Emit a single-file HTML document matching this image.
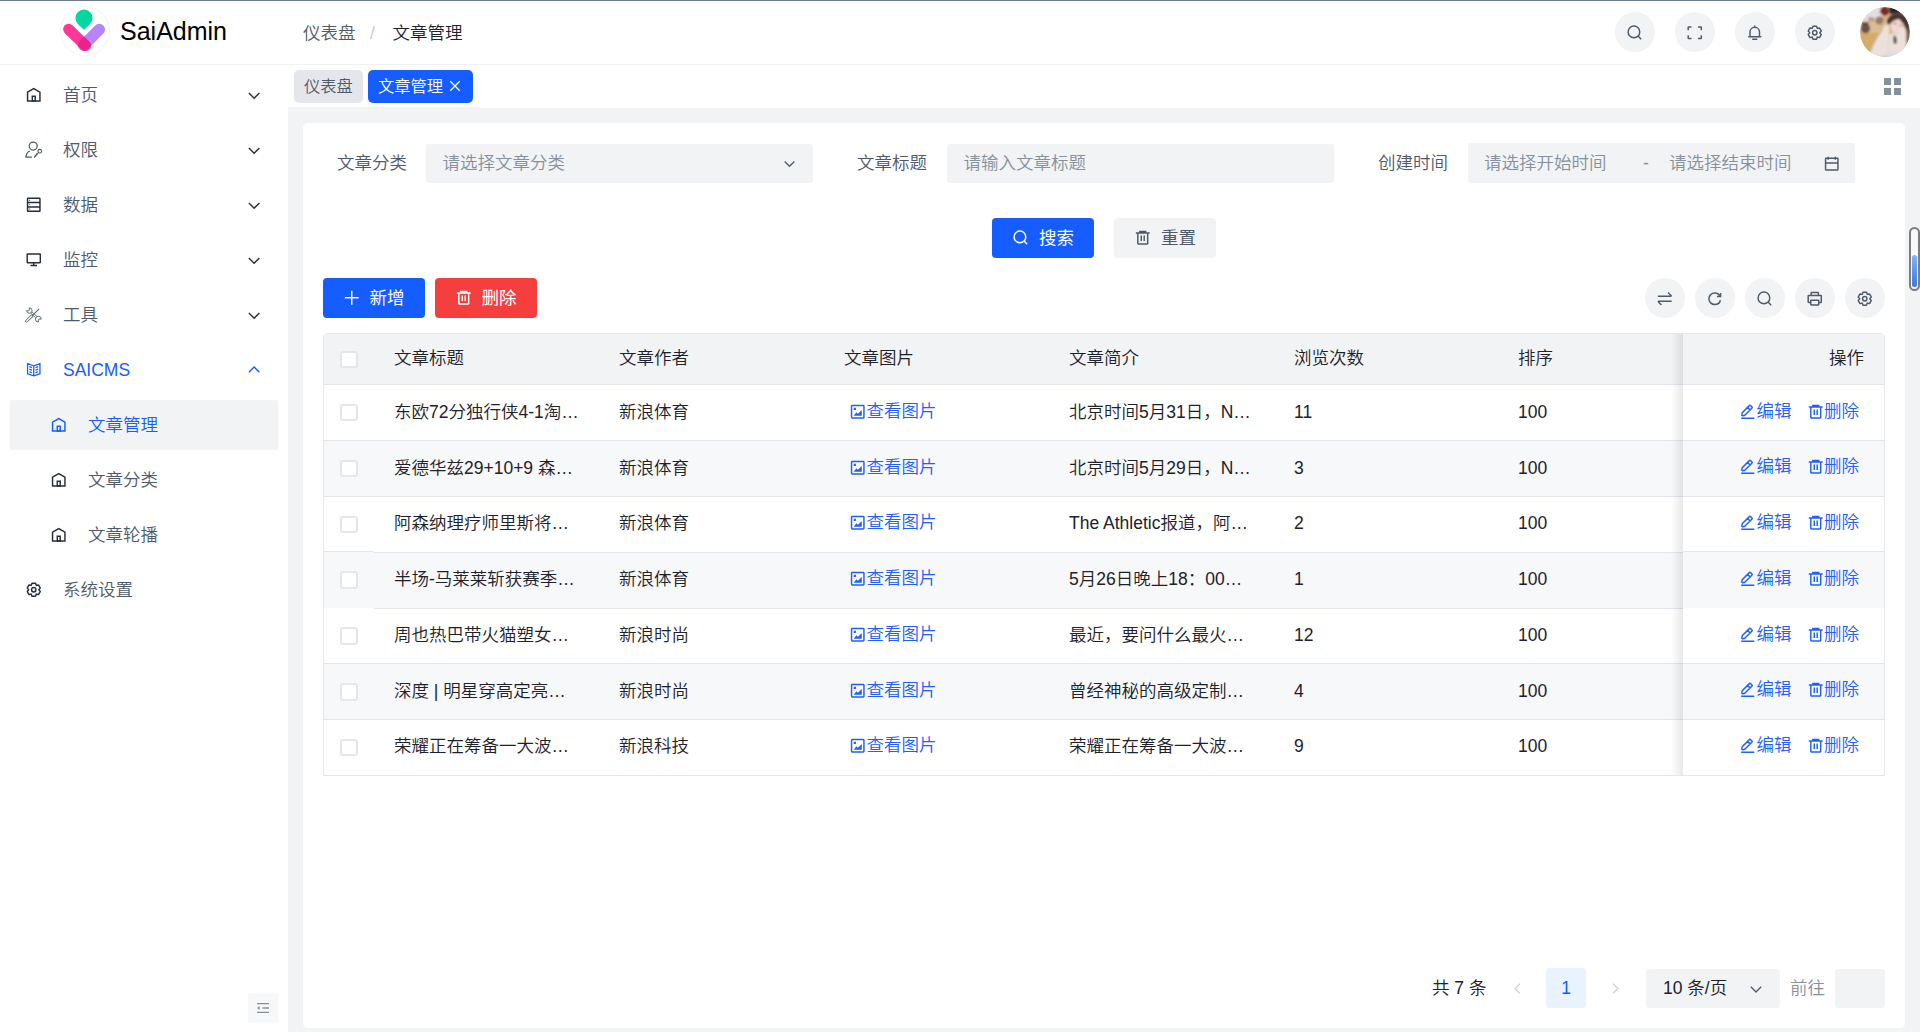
<!DOCTYPE html>
<html lang="zh-CN">
<head>
<meta charset="utf-8">
<title>SaiAdmin - 文章管理</title>
<style>
*{box-sizing:border-box;margin:0;padding:0}
html,body{width:1920px;height:1032px;overflow:hidden;background:#fff}
body{position:relative;font-family:"Liberation Sans","Noto Sans CJK SC",sans-serif;font-size:17.5px;font-weight:350;color:#1d2129;-webkit-font-smoothing:antialiased}
.abs{position:absolute}
svg.i{width:17.5px;height:17.5px;fill:none;stroke:currentColor;stroke-width:4;stroke-linecap:butt;stroke-linejoin:miter;display:block;flex:none}
.topline{left:0;top:0;width:1920px;height:1px;background:#6b7a94;z-index:9}
.header{left:0;top:0;width:1920px;height:65px;border-bottom:1px solid #f1f2f4;background:#fff}
.logo{left:60px;top:6px;width:50px;height:50px}
.brand{left:120px;top:16px;font-size:25px;line-height:30px;color:#000;white-space:nowrap}
.bc{top:18px;height:30px;line-height:30px;white-space:nowrap}
.hbtn{padding-top:2px;top:12px;width:40px;height:40px;border-radius:50%;background:#f2f3f5;color:#4e5969;display:flex;align-items:center;justify-content:center}
.avatar{left:1860px;top:7px;width:50px;height:50px;border-radius:50%;overflow:hidden}
/* sidebar */
.side{left:0;top:65px;width:288px;height:967px;background:#fff}
.mi{left:10px;width:268px;height:50px;border-radius:3px;display:flex;align-items:center;color:#4e5969;white-space:nowrap}
.mi .ic{position:absolute;left:15px;top:16px;color:#272e3b}
.mi .tx{position:absolute;left:53px;top:0;line-height:50px}
.mi .ar{position:absolute;left:236px;top:17px;width:16.25px;height:16.25px;color:#272e3b}
.mi.sub .ic{left:40px}
.mi.sub .tx{left:78px}
.mi.sel{background:#f2f3f5;color:#165dff}
.mi.act{color:#165dff}
.mi.act .ic,.mi.act .ar,.mi.sel .ic{color:#165dff}
.fold{left:248px;top:993px;width:30px;height:30px;border-radius:3px;background:#f7f8fa;color:#86909c;display:flex;align-items:center;justify-content:center}
/* tabs */
.tab{top:70px;height:33px;border-radius:5px;font-size:16.25px;line-height:33px;white-space:nowrap;padding-left:10px}
.content{left:288px;top:108px;width:1632px;height:924px;background:#f2f3f5}
.card{left:303px;top:123px;width:1602px;height:904.5px;background:#fff;border-radius:5px}
.lbl{top:144px;height:39px;line-height:38px;color:#4e5969;white-space:nowrap}
.inp{top:144px;width:387px;height:39px;background:#f2f3f5;border-radius:3px;color:#86909c;line-height:38px;white-space:nowrap}
.btn{font-weight:400;height:40px;width:102px;border-radius:4px;display:flex;align-items:center;white-space:nowrap;line-height:40px}
.btn .t{position:absolute;top:0}
.btn svg{position:absolute}
.cbtn{padding-top:1.500px;top:278px;width:40px;height:40px;border-radius:50%;background:#f2f3f5;color:#4e5969;display:flex;align-items:center;justify-content:center}
/* table */
.tbl{left:323px;top:333px;width:1562px;height:443px;border:1px solid #e5e6eb;border-radius:5px 5px 0 0;overflow:hidden}
.tr{left:0;width:1560px;height:55.83px;border-bottom:1px solid #e5e6eb;background:#fff}
.tr.h{top:0;height:51.2px;background:#f2f3f5}
.tr.s{background:#f7f8fa}
.td{top:0;height:55.83px;line-height:54px;white-space:nowrap;overflow:hidden}
.tr.h .td{line-height:49px;height:51px}
.fixl{left:0;top:0;width:50px;height:441px}
.cb{left:16px;width:17.5px;height:17.5px;border:2px solid #e5e6eb;border-radius:3px;background:#fff}
.lk{color:#2160f3}
.fix{left:1359px;top:0;width:201px;height:441px}
.fsh{left:1347px;top:0;width:12px;height:441px;background:linear-gradient(to right,rgba(0,0,0,0),rgba(0,0,0,.09))}
.pg{top:968px;height:40px;line-height:40px;white-space:nowrap}
</style>
</head>
<body>
<div class="abs header"></div>
<div class="abs topline"></div>
<svg class="abs logo" viewBox="0 0 50 50"><defs><clipPath id="lgp"><path d="M4.7 27.1a5.5 5.5 0 0 1 7.8-7.8l16.9 16.4a5.5 5.5 0 0 1-7.8 7.8Z"/></clipPath></defs><circle cx="25" cy="25" r="24.5" fill="#fff" stroke="#f2f3f5" stroke-width="1"/><path d="M39.3 23.5 23.6 39.2" stroke="#b685fb" stroke-width="11.5" stroke-linecap="round" fill="none"/><path d="M8.6 23.25 25.5 39.6" stroke="#fb3797" stroke-width="11" stroke-linecap="round" fill="none"/><path d="M39.3 23.5 23.6 39.2" stroke="#ec2090" stroke-width="11.5" stroke-linecap="round" fill="none" clip-path="url(#lgp)"/><path d="M24 24.6 17.6 18.6A9.2 9.2 0 1 1 30.4 18.6Z" fill="#06d6a0" stroke="#fff" stroke-width="1.2"/></svg>
<div class="abs brand">SaiAdmin</div>
<div class="abs bc" style="left:303px;color:#4e5969">仪表盘</div>
<div class="abs bc" style="left:370px;color:#c9cdd4">/</div>
<div class="abs bc" style="left:392.5px;color:#1d2129">文章管理</div>
<div class="abs hbtn" style="left:1615px"><svg class="i" viewBox="0 0 48 48"><path d="M33.072 33.071c6.248-6.248 6.248-16.379 0-22.627-6.249-6.249-16.38-6.249-22.628 0-6.248 6.248-6.248 16.379 0 22.627 6.248 6.248 16.38 6.248 22.628 0Zm0 0 8.485 8.485"/></svg></div>
<div class="abs hbtn" style="left:1675px"><svg class="i" viewBox="0 0 48 48"><path d="M42 17V9a1 1 0 0 0-1-1h-8M6 17V9a1 1 0 0 1 1-1h8m27 23v8a1 1 0 0 1-1 1h-8M6 31v8a1 1 0 0 0 1 1h8"/></svg></div>
<div class="abs hbtn" style="left:1735px"><svg class="i" viewBox="0 0 48 48"><path d="M24 9c7.18 0 13 5.82 13 13v13H11V22c0-7.18 5.82-13 13-13Zm0 0V4M6 35h36m-25 7h14"/></svg></div>
<div class="abs hbtn" style="left:1795px"><svg class="i" viewBox="0 0 48 48"><path d="M18.797 6.732A1 1 0 0 1 19.76 6h8.48a1 1 0 0 1 .964.732l1.285 4.628a1 1 0 0 0 1.213.7l4.651-1.2a1 1 0 0 1 1.116.468l4.24 7.344a1 1 0 0 1-.153 1.2L38.193 23.3a1 1 0 0 0 0 1.402l3.364 3.427a1 1 0 0 1 .153 1.2l-4.24 7.344a1 1 0 0 1-1.116.468l-4.65-1.2a1 1 0 0 0-1.214.7l-1.285 4.628a1 1 0 0 1-.964.732h-8.48a1 1 0 0 1-.963-.732L17.51 36.64a1 1 0 0 0-1.213-.7l-4.65 1.2a1 1 0 0 1-1.116-.468l-4.24-7.344a1 1 0 0 1 .153-1.2L9.809 24.7a1 1 0 0 0 0-1.402l-3.364-3.427a1 1 0 0 1-.153-1.2l4.24-7.344a1 1 0 0 1 1.116-.468l4.65 1.2a1 1 0 0 0 1.213-.7l1.286-4.628Z"/><path d="M30 24a6 6 0 1 1-12 0 6 6 0 0 1 12 0Z"/></svg></div>
<svg class="abs avatar" viewBox="0 0 50 50"><defs><clipPath id="avc"><circle cx="25" cy="25" r="25"/></clipPath><filter id="avb" x="-20%" y="-20%" width="140%" height="140%"><feGaussianBlur stdDeviation="1.1"/></filter></defs><g clip-path="url(#avc)"><rect width="50" height="50" fill="#d3b182"/><g filter="url(#avb)"><path d="M0 0H22V9L14 12 6 16 0 18Z" fill="#e4dde3"/><rect x="0" y="14" width="26" height="13" fill="#d9bc93"/><path d="M0 26H20L16 50H0Z" fill="#d4ab69"/><ellipse cx="24.500" cy="4" rx="4.600" ry="4.300" fill="#7a2822"/><path d="M29 0H50V8L40 6 30 7Z" fill="#2a2230"/><ellipse cx="5.500" cy="21.500" rx="4.600" ry="5" fill="#6a5047"/><rect x="1.500" y="15.500" width="7" height="2" fill="#4a372f"/><ellipse cx="19.500" cy="13.500" rx="3.800" ry="4" fill="#9b7a66"/><ellipse cx="11" cy="12" rx="3" ry="2" fill="#b89a80"/><path d="M27 17C27 8 36 4 44 8 49 11 50 20 50 34L45 33 44 16Z" fill="#47302e"/><ellipse cx="36.500" cy="19" rx="6.200" ry="7.500" fill="#f1d6d1"/><path d="M29 14C31 8 40 7 45 13 40 11 34 12 30 17Z" fill="#4a322f"/><path d="M33.500 16.500h3M39.500 18.500h2.500" stroke="#6b4a44" stroke-width="1"/><path d="M9 50C12 40 17 30 22 25 23 20 25 17 28 17.500 30 19 29 24 29 27L33 26 38 27C39 22 42 19 45 20 47 26 47 40 43 50Z" fill="#eae2da"/><path d="M46 21C49 24 50 30 50 38L46.500 40Z" fill="#8a6b57"/><path d="M33.500 29C35.500 28 37 30 36.500 36 35.500 38 34 37 33.500 35Z" fill="#4b3429"/><path d="M29 27 28.500 45" stroke="#d9cfc6" stroke-width="1"/><path d="M20 50C25 44.500 36 44 42 47.500V50Z" fill="#dddbe8"/></g></g></svg>
<div class="abs side"></div>
<div class="abs mi" style="top:70px"><svg class="i ic" viewBox="0 0 48 48"><path d="M7 17 24 7l17 10v24H7V17Z"/><path d="M20 28h8v13h-8V28Z"/></svg><span class="tx">首页</span><svg class="i ar" viewBox="0 0 48 48"><path d="M39.6 17.443 24.043 33 8.487 17.443"/></svg></div>
<div class="abs mi" style="top:125px"><svg class="i ic" viewBox="0 0 48 48" style="stroke-width:3.4;color:#4e5969"><circle cx="22.5" cy="13.8" r="11"/><path d="M13.6 27.400C7 30 3 37 2.700 44.200H19"/><circle cx="40.600" cy="28" r="5" style="stroke-width:3"/><path d="M37 31.500 25 45.500M30.500 34.500l4 3.500M27 38.500l4 3.500" style="stroke-width:3"/></svg><span class="tx">权限</span><svg class="i ar" viewBox="0 0 48 48"><path d="M39.6 17.443 24.043 33 8.487 17.443"/></svg></div>
<div class="abs mi" style="top:180px"><svg class="i ic" viewBox="0 0 48 48"><path d="M7 18h34v12H7V18ZM40 6H8a1 1 0 0 0-1 1v11h34V7a1 1 0 0 0-1-1ZM7 30h34v11a1 1 0 0 1-1 1H8a1 1 0 0 1-1-1V30Z"/><path d="M12 12h2M12 24h2M12 36h2" style="stroke-width:3"/></svg><span class="tx">数据</span><svg class="i ar" viewBox="0 0 48 48"><path d="M39.6 17.443 24.043 33 8.487 17.443"/></svg></div>
<div class="abs mi" style="top:235px"><svg class="i ic" viewBox="0 0 48 48"><path d="M24 32v8m0 0h-9m9 0h9M7 32h34a1 1 0 0 0 1-1V9a1 1 0 0 0-1-1H7a1 1 0 0 0-1 1v22a1 1 0 0 0 1 1Z"/></svg><span class="tx">监控</span><svg class="i ar" viewBox="0 0 48 48"><path d="M39.6 17.443 24.043 33 8.487 17.443"/></svg></div>
<div class="abs mi" style="top:290px"><svg class="i ic" viewBox="0 0 48 48" style="stroke-width:2.600;color:#5a6473"><path d="M12 5A7.500 7.500 0 1 1 4.500 12.500M12 5v6.500l-1.500 1.500H4.500M44.500 36A8 8 0 1 0 36.500 44M44.500 36H38l-1.500 1.500V44M19.100 16 32.600 28.500M15.500 19.600 29 32.100"/><path d="M18.400 27.700 4.400 41.100" style="stroke-width:8;stroke-linecap:round"/><path d="M18.400 27.700 4.400 41.100" style="stroke-width:3.600;stroke-linecap:round;stroke:#fff"/><path d="M38.500 8 21 25.500" style="stroke-width:3"/></svg><span class="tx">工具</span><svg class="i ar" viewBox="0 0 48 48"><path d="M39.6 17.443 24.043 33 8.487 17.443"/></svg></div>
<div class="abs mi act" style="top:345px"><svg class="i ic" viewBox="0 0 48 48" style="stroke-width:3.500"><path d="M24 13 7 7v28l17 6 17-6V7l-17 6Zm0 0v27.5M29 18l7-2.500M29 25l7-2.500M29 32l7-2.500M19 18l-7-2.500m7 9.500-7-2.500m7 9.500-7-2.500"/></svg><span class="tx">SAICMS</span><svg class="i ar" viewBox="0 0 48 48"><path d="M39.6 30.557 24.043 15 8.487 30.557"/></svg></div>
<div class="abs mi sub sel" style="top:400px"><svg class="i ic" viewBox="0 0 48 48"><path d="M7 17 24 7l17 10v24H7V17Z"/><path d="M20 28h8v13h-8V28Z"/></svg><span class="tx">文章管理</span></div>
<div class="abs mi sub" style="top:455px"><svg class="i ic" viewBox="0 0 48 48"><path d="M7 17 24 7l17 10v24H7V17Z"/><path d="M20 28h8v13h-8V28Z"/></svg><span class="tx">文章分类</span></div>
<div class="abs mi sub" style="top:510px"><svg class="i ic" viewBox="0 0 48 48"><path d="M7 17 24 7l17 10v24H7V17Z"/><path d="M20 28h8v13h-8V28Z"/></svg><span class="tx">文章轮播</span></div>
<div class="abs mi" style="top:565px"><svg class="i ic" viewBox="0 0 48 48"><path d="M18.797 6.732A1 1 0 0 1 19.76 6h8.48a1 1 0 0 1 .964.732l1.285 4.628a1 1 0 0 0 1.213.7l4.651-1.200a1 1 0 0 1 1.116.468l4.240 7.344a1 1 0 0 1-.153 1.200L38.193 23.300a1 1 0 0 0 0 1.402l3.364 3.427a1 1 0 0 1 .153 1.200l-4.240 7.344a1 1 0 0 1-1.116.468l-4.650-1.200a1 1 0 0 0-1.214.7l-1.285 4.628a1 1 0 0 1-.964.732h-8.480a1 1 0 0 1-.963-.732L17.510 36.640a1 1 0 0 0-1.213-.7l-4.650 1.200a1 1 0 0 1-1.116-.468l-4.240-7.344a1 1 0 0 1 .153-1.200L9.809 24.700a1 1 0 0 0 0-1.402l-3.364-3.427a1 1 0 0 1-.153-1.200l4.240-7.344a1 1 0 0 1 1.116-.468l4.650 1.200a1 1 0 0 0 1.213-.7l1.286-4.628Z"/><path d="M30 24a6 6 0 1 1-12 0 6 6 0 0 1 12 0Z"/></svg><span class="tx">系统设置</span></div>
<div class="abs fold"><svg class="i" viewBox="0 0 48 48" style="width:16px;height:16px"><path d="M42 11H6M42 24H22M42 37H6"/><path d="M14 30 6 24l8-6Z" fill="currentColor" stroke="none"/></svg></div>
<div class="abs tab" style="left:294px;width:69px;background:#e5e6eb;color:#4e5969">仪表盘</div>
<div class="abs tab" style="left:368px;width:105px;background:#165dff;color:#fff">文章管理<svg class="i" viewBox="0 0 48 48" style="position:absolute;left:79.3px;top:8.2px;width:16px;height:16px;stroke-width:3.8"><path d="M9.857 9.858 24 24m0 0 14.142 14.142M24 24 38.142 9.858M24 24 9.857 38.142"/></svg></div>
<svg class="abs" style="left:1884px;top:78px;width:17px;height:17px" viewBox="0 0 17 17"><path d="M0 0h7v7H0zM10 0h7v7h-7zM0 10h7v7H0zM10 10h7v7h-7z" fill="#86909c"/></svg>
<div class="abs content"></div>
<div class="abs" style="left:288px;top:107px;width:192px;height:1px;background:#f2f3f5"></div>
<div class="abs card"></div>
<div class="abs" style="left:1909px;top:227px;width:11px;height:64px;border:2px solid #7c7c7c;border-radius:6px;background:#f6f8fa;overflow:hidden"><div class="abs" style="left:1px;top:26px;width:5px;height:32px;border-radius:3px;background:linear-gradient(#7ab8f7,#3a78e8)"></div></div>
<div class="abs lbl" style="left:337px">文章分类</div>
<div class="abs inp" style="left:426px"><span class="abs" style="left:16.5px;top:0">请选择文章分类</span><svg class="i" viewBox="0 0 48 48" style="position:absolute;left:355.5px;top:11.5px;width:15px;height:15px;color:#4e5969"><path d="M39.600 17.443 24.043 33 8.487 17.443"/></svg></div>
<div class="abs lbl" style="left:857px">文章标题</div>
<div class="abs inp" style="left:947px"><span class="abs" style="left:16.5px;top:0">请输入文章标题</span></div>
<div class="abs lbl" style="left:1378px">创建时间</div>
<div class="abs inp" style="left:1468px;top:143px;height:40px;line-height:40px"><span class="abs" style="left:16px;top:0">请选择开始时间</span><span class="abs" style="left:175px;top:0">-</span><span class="abs" style="left:201px;top:0">请选择结束时间</span><svg class="i" viewBox="0 0 48 48" style="position:absolute;left:355px;top:11.5px;width:17.5px;height:17.5px;color:#4e5969"><path d="M7 22h34M14 5v8m20-8v8M8 41h32a1 1 0 0 0 1-1V10a1 1 0 0 0-1-1H8a1 1 0 0 0-1 1v30a1 1 0 0 0 1 1Z"/></svg></div>
<div class="abs btn" style="left:992px;top:218px;background:#165dff;color:#fff"><svg class="i" viewBox="0 0 48 48" style="left:20px;top:11px"><path d="M33.072 33.071c6.248-6.248 6.248-16.379 0-22.627-6.249-6.249-16.380-6.249-22.628 0-6.248 6.248-6.248 16.379 0 22.627 6.248 6.248 16.380 6.248 22.628 0Zm0 0 8.485 8.485"/></svg><span class="t" style="left:47px">搜索</span></div>
<div class="abs btn" style="left:1114px;top:218px;background:#f2f3f5;color:#4e5969"><svg class="i" viewBox="0 0 48 48" style="left:20px;top:11px"><path d="M5 11h5.500m0 0v29a1 1 0 0 0 1 1h25a1 1 0 0 0 1-1V11m-27 0H16m21.500 0H43m-5.500 0H32m-16 0V7h16v4m-16 0h16M20 18v15m8-15v15"/></svg><span class="t" style="left:47px">重置</span></div>
<div class="abs btn" style="left:323px;top:278px;background:#165dff;color:#fff"><svg class="i" viewBox="0 0 48 48" style="left:20px;top:11px"><path d="M5 24h38M24 5v38"/></svg><span class="t" style="left:46.5px">新增</span></div>
<div class="abs btn" style="left:435px;top:278px;background:#f53f3f;color:#fff"><svg class="i" viewBox="0 0 48 48" style="left:20px;top:11px"><path d="M5 11h5.500m0 0v29a1 1 0 0 0 1 1h25a1 1 0 0 0 1-1V11m-27 0H16m21.500 0H43m-5.500 0H32m-16 0V7h16v4m-16 0h16M20 18v15m8-15v15"/></svg><span class="t" style="left:46.5px">删除</span></div>
<div class="abs cbtn" style="left:1645px"><svg class="i" viewBox="0 0 48 48"><path d="M5 17h35.586c.890 0 1.337-1.077.707-1.707L33 7M43 31H7.414c-.890 0-1.337 1.077-.707 1.707L15 41"/></svg></div>
<div class="abs cbtn" style="left:1695px"><svg class="i" viewBox="0 0 48 48"><path d="M38.837 18C36.463 12.136 30.715 8 24 8 15.163 8 8 15.163 8 24s7.163 16 16 16c7.455 0 13.720-5.100 15.496-12M40 8v10H30"/></svg></div>
<div class="abs cbtn" style="left:1745px"><svg class="i" viewBox="0 0 48 48"><path d="M33.072 33.071c6.248-6.248 6.248-16.379 0-22.627-6.249-6.249-16.380-6.249-22.628 0-6.248 6.248-6.248 16.379 0 22.627 6.248 6.248 16.380 6.248 22.628 0Zm0 0 8.485 8.485"/></svg></div>
<div class="abs cbtn" style="left:1795px"><svg class="i" viewBox="0 0 48 48"><path d="M14 15V8a1 1 0 0 1 1-1h18a1 1 0 0 1 1 1v7m-20 0H7a1 1 0 0 0-1 1v17a1 1 0 0 0 1 1h6m1-19h20m0 0h7a1 1 0 0 1 1 1v17a1 1 0 0 1-1 1h-6m-22 0v6a1 1 0 0 0 1 1h20a1 1 0 0 0 1-1v-6m-22 0v-5a1 1 0 0 1 1-1h20a1 1 0 0 1 1 1v5"/></svg></div>
<div class="abs cbtn" style="left:1845px"><svg class="i" viewBox="0 0 48 48"><path d="M18.797 6.732A1 1 0 0 1 19.760 6h8.480a1 1 0 0 1 .964.732l1.285 4.628a1 1 0 0 0 1.213.700l4.651-1.200a1 1 0 0 1 1.116.468l4.240 7.344a1 1 0 0 1-.153 1.200L38.193 23.300a1 1 0 0 0 0 1.402l3.364 3.427a1 1 0 0 1 .153 1.200l-4.240 7.344a1 1 0 0 1-1.116.468l-4.650-1.200a1 1 0 0 0-1.214.700l-1.285 4.628a1 1 0 0 1-.964.732h-8.480a1 1 0 0 1-.963-.732L17.510 36.640a1 1 0 0 0-1.213-.700l-4.650 1.200a1 1 0 0 1-1.116-.468l-4.240-7.344a1 1 0 0 1 .153-1.200L9.809 24.700a1 1 0 0 0 0-1.402l-3.364-3.427a1 1 0 0 1-.153-1.200l4.240-7.344a1 1 0 0 1 1.116-.468l4.650 1.200a1 1 0 0 0 1.213-.700l1.286-4.628Z"/><path d="M30 24a6 6 0 1 1-12 0 6 6 0 0 1 12 0Z"/></svg></div>
<div class="abs tbl">
<div class="abs tr h"><span class="abs td" style="left:70px">文章标题</span><span class="abs td" style="left:295px">文章作者</span><span class="abs td" style="left:520px">文章图片</span><span class="abs td" style="left:745px">文章简介</span><span class="abs td" style="left:970px">浏览次数</span><span class="abs td" style="left:1194px">排序</span></div>
<div class="abs tr" style="top:51.20px"><span class="abs td" style="left:70px;width:185px;text-overflow:ellipsis">东欧72分独行侠4-1淘汰森林狼晋级总决赛</span><span class="abs td" style="left:295px">新浪体育</span><span class="abs td lk" style="left:525px;top:-1px"><svg class="i" viewBox="0 0 48 48" style="position:absolute;left:0;top:19px;width:17.5px;height:17.5px"><path d="m24 33 9-9v9h-9Zm0 0-3.500-4.500L17 33h7Zm15 8H9a2 2 0 0 1-2-2V9a2 2 0 0 1 2-2h30a2 2 0 0 1 2 2v30a2 2 0 0 1-2 2ZM15 15h2v2h-2v-2Z"/><path fill="currentColor" stroke="none" d="M33 33v-9l-9 9h9ZM23.500 33l-3-4-3 4h6ZM15 15h2v2h-2z"/></svg><span style="padding-left:17.5px">查看图片</span></span><span class="abs td" style="left:745px;width:185px;text-overflow:ellipsis">北京时间5月31日，NBA季后赛西部决赛</span><span class="abs td" style="left:970px">11</span><span class="abs td" style="left:1194px">100</span></div>
<div class="abs tr s" style="top:107.03px"><span class="abs td" style="left:70px;width:185px;text-overflow:ellipsis">爱德华兹29+10+9 森林狼大胜独行侠</span><span class="abs td" style="left:295px">新浪体育</span><span class="abs td lk" style="left:525px;top:-1px"><svg class="i" viewBox="0 0 48 48" style="position:absolute;left:0;top:19px;width:17.5px;height:17.5px"><path d="m24 33 9-9v9h-9Zm0 0-3.500-4.500L17 33h7Zm15 8H9a2 2 0 0 1-2-2V9a2 2 0 0 1 2-2h30a2 2 0 0 1 2 2v30a2 2 0 0 1-2 2ZM15 15h2v2h-2v-2Z"/><path fill="currentColor" stroke="none" d="M33 33v-9l-9 9h9ZM23.500 33l-3-4-3 4h6ZM15 15h2v2h-2z"/></svg><span style="padding-left:17.5px">查看图片</span></span><span class="abs td" style="left:745px;width:185px;text-overflow:ellipsis">北京时间5月29日，NBA季后赛西部决赛</span><span class="abs td" style="left:970px">3</span><span class="abs td" style="left:1194px">100</span></div>
<div class="abs tr" style="top:162.86px"><span class="abs td" style="left:70px;width:185px;text-overflow:ellipsis;top:-1px">阿森纳理疗师里斯将加盟曼联</span><span class="abs td" style="left:295px;top:-1px">新浪体育</span><span class="abs td lk" style="left:525px;top:-2px"><svg class="i" viewBox="0 0 48 48" style="position:absolute;left:0;top:19px;width:17.5px;height:17.5px"><path d="m24 33 9-9v9h-9Zm0 0-3.500-4.500L17 33h7Zm15 8H9a2 2 0 0 1-2-2V9a2 2 0 0 1 2-2h30a2 2 0 0 1 2 2v30a2 2 0 0 1-2 2ZM15 15h2v2h-2v-2Z"/><path fill="currentColor" stroke="none" d="M33 33v-9l-9 9h9ZM23.500 33l-3-4-3 4h6ZM15 15h2v2h-2z"/></svg><span style="padding-left:17.5px">查看图片</span></span><span class="abs td" style="left:745px;width:185px;text-overflow:ellipsis;top:-1px">The Athletic报道，阿森纳理疗师</span><span class="abs td" style="left:970px;top:-1px">2</span><span class="abs td" style="left:1194px;top:-1px">100</span></div>
<div class="abs tr s" style="top:218.69px"><span class="abs td" style="left:70px;width:185px;text-overflow:ellipsis;top:-1px">半场-马莱莱斩获赛季第七球</span><span class="abs td" style="left:295px;top:-1px">新浪体育</span><span class="abs td lk" style="left:525px;top:-2px"><svg class="i" viewBox="0 0 48 48" style="position:absolute;left:0;top:19px;width:17.5px;height:17.5px"><path d="m24 33 9-9v9h-9Zm0 0-3.500-4.500L17 33h7Zm15 8H9a2 2 0 0 1-2-2V9a2 2 0 0 1 2-2h30a2 2 0 0 1 2 2v30a2 2 0 0 1-2 2ZM15 15h2v2h-2v-2Z"/><path fill="currentColor" stroke="none" d="M33 33v-9l-9 9h9ZM23.500 33l-3-4-3 4h6ZM15 15h2v2h-2z"/></svg><span style="padding-left:17.5px">查看图片</span></span><span class="abs td" style="left:745px;width:185px;text-overflow:ellipsis;top:-1px">5月26日晚上18：00，中超联赛</span><span class="abs td" style="left:970px;top:-1px">1</span><span class="abs td" style="left:1194px;top:-1px">100</span></div>
<div class="abs tr" style="top:274.52px"><span class="abs td" style="left:70px;width:185px;text-overflow:ellipsis;top:-1px">周也热巴带火猫塑女孩穿搭</span><span class="abs td" style="left:295px;top:-1px">新浪时尚</span><span class="abs td lk" style="left:525px;top:-2px"><svg class="i" viewBox="0 0 48 48" style="position:absolute;left:0;top:19px;width:17.5px;height:17.5px"><path d="m24 33 9-9v9h-9Zm0 0-3.500-4.500L17 33h7Zm15 8H9a2 2 0 0 1-2-2V9a2 2 0 0 1 2-2h30a2 2 0 0 1 2 2v30a2 2 0 0 1-2 2ZM15 15h2v2h-2v-2Z"/><path fill="currentColor" stroke="none" d="M33 33v-9l-9 9h9ZM23.500 33l-3-4-3 4h6ZM15 15h2v2h-2z"/></svg><span style="padding-left:17.5px">查看图片</span></span><span class="abs td" style="left:745px;width:185px;text-overflow:ellipsis;top:-1px">最近，要问什么最火，那一定是</span><span class="abs td" style="left:970px;top:-1px">12</span><span class="abs td" style="left:1194px;top:-1px">100</span></div>
<div class="abs tr s" style="top:330.35px"><span class="abs td" style="left:70px;width:185px;text-overflow:ellipsis">深度 | 明星穿高定亮相红毯</span><span class="abs td" style="left:295px">新浪时尚</span><span class="abs td lk" style="left:525px;top:-1px"><svg class="i" viewBox="0 0 48 48" style="position:absolute;left:0;top:19px;width:17.5px;height:17.5px"><path d="m24 33 9-9v9h-9Zm0 0-3.500-4.500L17 33h7Zm15 8H9a2 2 0 0 1-2-2V9a2 2 0 0 1 2-2h30a2 2 0 0 1 2 2v30a2 2 0 0 1-2 2ZM15 15h2v2h-2v-2Z"/><path fill="currentColor" stroke="none" d="M33 33v-9l-9 9h9ZM23.500 33l-3-4-3 4h6ZM15 15h2v2h-2z"/></svg><span style="padding-left:17.5px">查看图片</span></span><span class="abs td" style="left:745px;width:185px;text-overflow:ellipsis">曾经神秘的高级定制时装</span><span class="abs td" style="left:970px">4</span><span class="abs td" style="left:1194px">100</span></div>
<div class="abs tr" style="top:386.18px"><span class="abs td" style="left:70px;width:185px;text-overflow:ellipsis;top:-1px">荣耀正在筹备一大波新品</span><span class="abs td" style="left:295px;top:-1px">新浪科技</span><span class="abs td lk" style="left:525px;top:-2px"><svg class="i" viewBox="0 0 48 48" style="position:absolute;left:0;top:19px;width:17.5px;height:17.5px"><path d="m24 33 9-9v9h-9Zm0 0-3.500-4.500L17 33h7Zm15 8H9a2 2 0 0 1-2-2V9a2 2 0 0 1 2-2h30a2 2 0 0 1 2 2v30a2 2 0 0 1-2 2ZM15 15h2v2h-2v-2Z"/><path fill="currentColor" stroke="none" d="M33 33v-9l-9 9h9ZM23.500 33l-3-4-3 4h6ZM15 15h2v2h-2z"/></svg><span style="padding-left:17.5px">查看图片</span></span><span class="abs td" style="left:745px;width:185px;text-overflow:ellipsis;top:-1px">荣耀正在筹备一大波新品</span><span class="abs td" style="left:970px;top:-1px">9</span><span class="abs td" style="left:1194px;top:-1px">100</span></div>
<div class="abs fixl">
<div class="abs tr h" style="width:50px"><span class="abs cb" style="top:16.5px"></span></div>
<div class="abs tr" style="top:51px;height:56px;width:50px"><span class="abs cb" style="top:18.9px"></span></div>
<div class="abs tr s" style="top:107px;height:56px;width:50px"><span class="abs cb" style="top:18.7px"></span></div>
<div class="abs tr" style="top:163px;height:55px;width:50px"><span class="abs cb" style="top:18.6px"></span></div>
<div class="abs tr s" style="top:218px;height:56px;width:50px;border-bottom:0"><span class="abs cb" style="top:19.4px"></span></div>
<div class="abs tr" style="top:274px;height:56px;width:50px"><span class="abs cb" style="top:19.2px"></span></div>
<div class="abs tr s" style="top:330px;height:56px;width:50px"><span class="abs cb" style="top:19.0px"></span></div>
<div class="abs tr" style="top:386px;height:56px;width:50px"><span class="abs cb" style="top:18.9px"></span></div>
</div>
<div class="abs fsh"></div>
<div class="abs fix">
<div class="abs tr h" style="width:201px"><span class="abs td" style="right:20px">操作</span></div>
<div class="abs tr" style="top:51px;height:56px;width:201px"><span class="abs td lk" style="left:56px;top:-1.5px;height:56px"><svg class="i" viewBox="0 0 48 48" style="position:absolute;left:0;top:19px;width:17.5px;height:17.5px"><path d="m30.480 19.038 5.733-5.734a1 1 0 0 0 0-1.414l-5.586-5.586a1 1 0 0 0-1.414 0l-5.734 5.734m7 7L15.763 33.754a1 1 0 0 1-.590.286l-6.048.708a1 1 0 0 1-1.113-1.069l.477-6.310a1 1 0 0 1 .290-.631l14.700-14.700m7 7-7-7M6 42h36"/></svg><span style="padding-left:17.5px">编辑</span></span><span class="abs td lk" style="left:123.5px;top:-1.5px;height:56px"><svg class="i" viewBox="0 0 48 48" style="position:absolute;left:0;top:19px;width:17.5px;height:17.5px"><path d="M5 11h5.500m0 0v29a1 1 0 0 0 1 1h25a1 1 0 0 0 1-1V11m-27 0H16m21.500 0H43m-5.500 0H32m-16 0V7h16v4m-16 0h16M20 18v15m8-15v15"/></svg><span style="padding-left:17.5px">删除</span></span></div>
<div class="abs tr s" style="top:107px;height:56px;width:201px"><span class="abs td lk" style="left:56px;top:-2.5px;height:56px"><svg class="i" viewBox="0 0 48 48" style="position:absolute;left:0;top:19px;width:17.5px;height:17.5px"><path d="m30.480 19.038 5.733-5.734a1 1 0 0 0 0-1.414l-5.586-5.586a1 1 0 0 0-1.414 0l-5.734 5.734m7 7L15.763 33.754a1 1 0 0 1-.590.286l-6.048.708a1 1 0 0 1-1.113-1.069l.477-6.310a1 1 0 0 1 .290-.631l14.700-14.700m7 7-7-7M6 42h36"/></svg><span style="padding-left:17.5px">编辑</span></span><span class="abs td lk" style="left:123.5px;top:-2.5px;height:56px"><svg class="i" viewBox="0 0 48 48" style="position:absolute;left:0;top:19px;width:17.5px;height:17.5px"><path d="M5 11h5.500m0 0v29a1 1 0 0 0 1 1h25a1 1 0 0 0 1-1V11m-27 0H16m21.500 0H43m-5.500 0H32m-16 0V7h16v4m-16 0h16M20 18v15m8-15v15"/></svg><span style="padding-left:17.5px">删除</span></span></div>
<div class="abs tr" style="top:163px;height:55px;width:201px"><span class="abs td lk" style="left:56px;top:-2.5px;height:56px"><svg class="i" viewBox="0 0 48 48" style="position:absolute;left:0;top:19px;width:17.5px;height:17.5px"><path d="m30.480 19.038 5.733-5.734a1 1 0 0 0 0-1.414l-5.586-5.586a1 1 0 0 0-1.414 0l-5.734 5.734m7 7L15.763 33.754a1 1 0 0 1-.590.286l-6.048.708a1 1 0 0 1-1.113-1.069l.477-6.310a1 1 0 0 1 .290-.631l14.700-14.700m7 7-7-7M6 42h36"/></svg><span style="padding-left:17.5px">编辑</span></span><span class="abs td lk" style="left:123.5px;top:-2.5px;height:56px"><svg class="i" viewBox="0 0 48 48" style="position:absolute;left:0;top:19px;width:17.5px;height:17.5px"><path d="M5 11h5.500m0 0v29a1 1 0 0 0 1 1h25a1 1 0 0 0 1-1V11m-27 0H16m21.500 0H43m-5.500 0H32m-16 0V7h16v4m-16 0h16M20 18v15m8-15v15"/></svg><span style="padding-left:17.5px">删除</span></span></div>
<div class="abs tr s" style="top:218px;height:56px;width:201px;border-bottom:0"><span class="abs td lk" style="left:56px;top:-1.5px;height:56px"><svg class="i" viewBox="0 0 48 48" style="position:absolute;left:0;top:19px;width:17.5px;height:17.5px"><path d="m30.480 19.038 5.733-5.734a1 1 0 0 0 0-1.414l-5.586-5.586a1 1 0 0 0-1.414 0l-5.734 5.734m7 7L15.763 33.754a1 1 0 0 1-.590.286l-6.048.708a1 1 0 0 1-1.113-1.069l.477-6.310a1 1 0 0 1 .290-.631l14.700-14.700m7 7-7-7M6 42h36"/></svg><span style="padding-left:17.5px">编辑</span></span><span class="abs td lk" style="left:123.5px;top:-1.5px;height:56px"><svg class="i" viewBox="0 0 48 48" style="position:absolute;left:0;top:19px;width:17.5px;height:17.5px"><path d="M5 11h5.500m0 0v29a1 1 0 0 0 1 1h25a1 1 0 0 0 1-1V11m-27 0H16m21.500 0H43m-5.500 0H32m-16 0V7h16v4m-16 0h16M20 18v15m8-15v15"/></svg><span style="padding-left:17.5px">删除</span></span></div>
<div class="abs tr" style="top:274px;height:56px;width:201px"><span class="abs td lk" style="left:56px;top:-1.5px;height:56px"><svg class="i" viewBox="0 0 48 48" style="position:absolute;left:0;top:19px;width:17.5px;height:17.5px"><path d="m30.480 19.038 5.733-5.734a1 1 0 0 0 0-1.414l-5.586-5.586a1 1 0 0 0-1.414 0l-5.734 5.734m7 7L15.763 33.754a1 1 0 0 1-.590.286l-6.048.708a1 1 0 0 1-1.113-1.069l.477-6.310a1 1 0 0 1 .290-.631l14.700-14.700m7 7-7-7M6 42h36"/></svg><span style="padding-left:17.5px">编辑</span></span><span class="abs td lk" style="left:123.5px;top:-1.5px;height:56px"><svg class="i" viewBox="0 0 48 48" style="position:absolute;left:0;top:19px;width:17.5px;height:17.5px"><path d="M5 11h5.500m0 0v29a1 1 0 0 0 1 1h25a1 1 0 0 0 1-1V11m-27 0H16m21.500 0H43m-5.500 0H32m-16 0V7h16v4m-16 0h16M20 18v15m8-15v15"/></svg><span style="padding-left:17.5px">删除</span></span></div>
<div class="abs tr s" style="top:330px;height:56px;width:201px"><span class="abs td lk" style="left:56px;top:-2.5px;height:56px"><svg class="i" viewBox="0 0 48 48" style="position:absolute;left:0;top:19px;width:17.5px;height:17.5px"><path d="m30.480 19.038 5.733-5.734a1 1 0 0 0 0-1.414l-5.586-5.586a1 1 0 0 0-1.414 0l-5.734 5.734m7 7L15.763 33.754a1 1 0 0 1-.590.286l-6.048.708a1 1 0 0 1-1.113-1.069l.477-6.310a1 1 0 0 1 .290-.631l14.700-14.700m7 7-7-7M6 42h36"/></svg><span style="padding-left:17.5px">编辑</span></span><span class="abs td lk" style="left:123.5px;top:-2.5px;height:56px"><svg class="i" viewBox="0 0 48 48" style="position:absolute;left:0;top:19px;width:17.5px;height:17.5px"><path d="M5 11h5.500m0 0v29a1 1 0 0 0 1 1h25a1 1 0 0 0 1-1V11m-27 0H16m21.500 0H43m-5.500 0H32m-16 0V7h16v4m-16 0h16M20 18v15m8-15v15"/></svg><span style="padding-left:17.5px">删除</span></span></div>
<div class="abs tr" style="top:386px;height:56px;width:201px"><span class="abs td lk" style="left:56px;top:-2.5px;height:56px"><svg class="i" viewBox="0 0 48 48" style="position:absolute;left:0;top:19px;width:17.5px;height:17.5px"><path d="m30.480 19.038 5.733-5.734a1 1 0 0 0 0-1.414l-5.586-5.586a1 1 0 0 0-1.414 0l-5.734 5.734m7 7L15.763 33.754a1 1 0 0 1-.590.286l-6.048.708a1 1 0 0 1-1.113-1.069l.477-6.310a1 1 0 0 1 .290-.631l14.700-14.700m7 7-7-7M6 42h36"/></svg><span style="padding-left:17.5px">编辑</span></span><span class="abs td lk" style="left:123.5px;top:-2.5px;height:56px"><svg class="i" viewBox="0 0 48 48" style="position:absolute;left:0;top:19px;width:17.5px;height:17.5px"><path d="M5 11h5.500m0 0v29a1 1 0 0 0 1 1h25a1 1 0 0 0 1-1V11m-27 0H16m21.500 0H43m-5.500 0H32m-16 0V7h16v4m-16 0h16M20 18v15m8-15v15"/></svg><span style="padding-left:17.5px">删除</span></span></div>
</div>
</div>
<div class="abs pg" style="left:1432px">共 7 条</div>
<svg class="i abs" viewBox="0 0 48 48" style="left:1510px;top:981px;width:15px;height:15px;color:#c9cdd4"><path d="M32 8.400 16.444 23.956 32 39.513"/></svg>
<div class="abs pg" style="left:1546px;width:40px;text-align:center;background:#e8f3ff;color:#165dff;border-radius:3px">1</div>
<svg class="i abs" viewBox="0 0 48 48" style="left:1608px;top:981px;width:15px;height:15px;color:#c9cdd4"><path d="m16 39.513 15.556-15.557L16 8.400"/></svg>
<div class="abs pg" style="left:1646px;top:969px;width:134px;height:39px;line-height:38px;background:#f2f3f5;border-radius:3px;padding-left:17px">10 条/页<svg class="i" viewBox="0 0 48 48" style="position:absolute;left:102px;top:12px;width:16px;height:16px;color:#4e5969"><path d="M39.600 17.443 24.043 33 8.487 17.443"/></svg></div>
<div class="abs pg" style="left:1790px;color:#86909c">前往</div>
<div class="abs" style="left:1835px;top:969px;width:50px;height:39px;background:#f2f3f5;border-radius:3px"></div>
</body>
</html>
